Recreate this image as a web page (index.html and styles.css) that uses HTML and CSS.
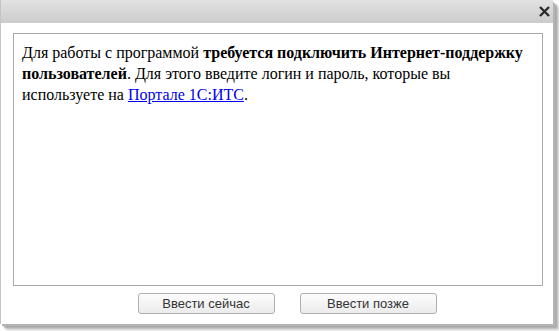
FILE: index.html
```html
<!DOCTYPE html>
<html lang="ru">
<head>
    <meta charset="UTF-8">
    <title>Интернет-поддержка</title>
    <link rel="stylesheet" href="styles.css">
</head>
<body>
    <div class="window">
        <div class="title-bar">
            <svg class="close" width="11" height="11" viewBox="0 0 11 11">
                <path d="M1 1 L10 10 M10 1 L1 10" stroke="#2b2b2b" stroke-width="2.4"/>
            </svg>
        </div>

        <div class="panel">
            <div class="message">
                Для работы с программой <b>требуется подключить Интернет-поддержку пользователей</b>.
                Для этого введите логин и пароль, которые вы используете на
                <a href="#">Портале 1С:ИТС</a>.
            </div>

            <div class="buttons">
                <button>Ввести сейчас</button>
                <button>Ввести позже</button>
            </div>
        </div>
    </div>
</body>
</html>
```

FILE: styles.css
```css
body {
    margin: 0;
    background: #fff;
    width: 559px;
    height: 331px;
    overflow: hidden;
}

.window {
    width: 553px;
    height: 324px;
    display: flex;
    flex-direction: column;
    box-shadow: 2px 2px 0 #b4b4b4, 4px 4px 2px #a8a8a8, 6px 6px 3px #c8c8c8;
    border-left: 1px solid #c4c4c4;
    box-sizing: border-box;
    border-top-right-radius: 3px;
}

.title-bar {
    height: 23px;
    display: flex;
    justify-content: flex-end;
    align-items: center;
    padding-right: 3px;
    background: linear-gradient(#e2e2e2, #cbcbcb);
}

.panel {
    flex: 1;
    background: #fff;
    padding: 10px 10px 0 12px;
    display: flex;
    flex-direction: column;
}

.message {
    height: 253px;
    box-sizing: border-box;
    border: 1px solid #a9a9a9;
    padding: 8px 8px;
    font-family: "Liberation Serif", "Times New Roman", serif;
    font-size: 16px;
    line-height: 21px;
    color: #000;
}

.message a {
    color: #0000ee;
}

.buttons {
    display: flex;
    justify-content: center;
    gap: 25px;
    margin-top: 7px;
    padding-left: 18px;
}

button {
    width: 137px;
    height: 21px;
    padding: 0;
    border: 1px solid #b0b0b0;
    border-radius: 3px;
    background: linear-gradient(#fdfdfd, #ebebeb);
    font-family: "Liberation Sans", Arial, sans-serif;
    font-size: 13px;
    color: #333;
}
```
